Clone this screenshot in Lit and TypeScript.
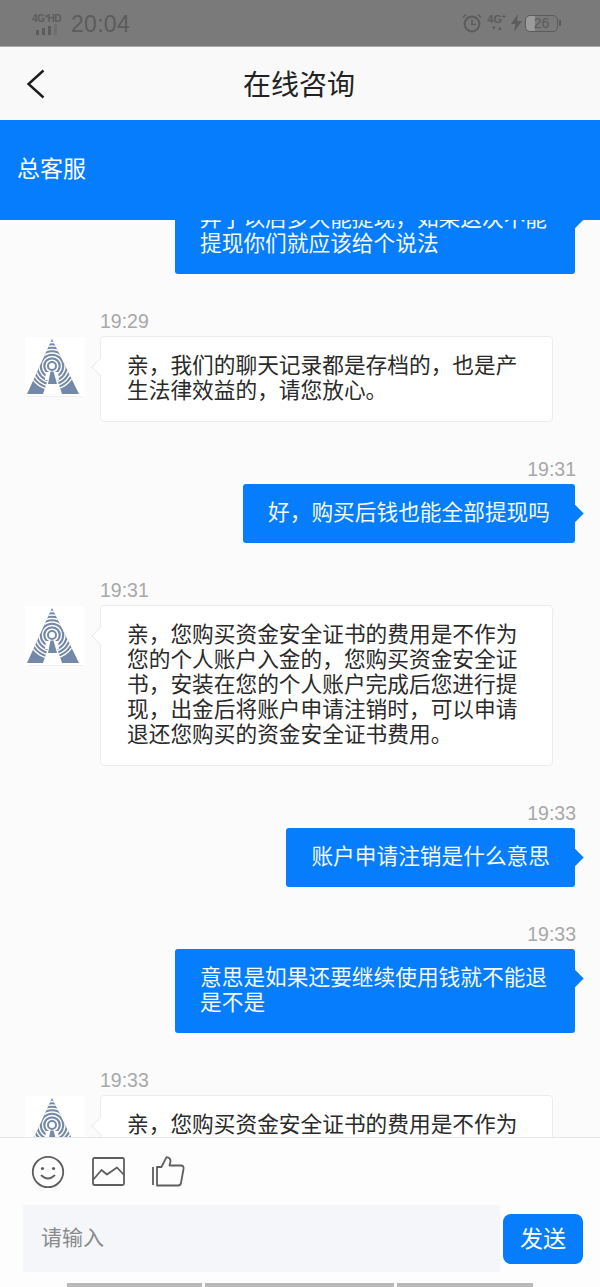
import { LitElement, html, css, svg } from "lit";
import { customElement } from "lit/decorators.js";

type Msg = { side: "l" | "r"; time?: string; text: string };

const messages: Msg[] = [
  { side: "r", text: "弄了以后多久能提现，如果这次不能提现你们就应该给个说法" },
  { side: "l", time: "19:29", text: "亲，我们的聊天记录都是存档的，也是产生法律效益的，请您放心。" },
  { side: "r", time: "19:31", text: "好，购买后钱也能全部提现吗" },
  { side: "l", time: "19:31", text: "亲，您购买资金安全证书的费用是不作为您的个人账户入金的，您购买资金安全证书，安装在您的个人账户完成后您进行提现，出金后将账户申请注销时，可以申请退还您购买的资金安全证书费用。" },
  { side: "r", time: "19:33", text: "账户申请注销是什么意思" },
  { side: "r", time: "19:33", text: "意思是如果还要继续使用钱就不能退是不是" },
  { side: "l", time: "19:33", text: "亲，您购买资金安全证书的费用是不作为您的个人账户入金的，您购买资金安全证书，安装在您的个人账户完成后您进行提现。" },
];

const avatar = svg`<svg class="logo" viewBox="0 0 60 60" width="60" height="60">
  <defs><clipPath id="tri"><path d="M27 2 L2 57 H54 Z"/></clipPath></defs>
  <rect width="60" height="60" fill="#fff"/>
  <path d="M27 2 L2 57 H18 L23 42 H32 L37 57 H54 Z" fill="#7488a8"/>
  <g clip-path="url(#tri)" fill="none" stroke="#fff" stroke-width="1.4">
    <circle cx="27" cy="29" r="9.5"/>
    <circle cx="27" cy="29" r="13"/>
    <circle cx="27" cy="29" r="16.5"/>
    <circle cx="27" cy="29" r="20"/>
    <circle cx="27" cy="29" r="23.5"/>
  </g>
  <circle cx="27" cy="29" r="6.6" fill="#fff"/>
  <circle cx="27" cy="29" r="4" fill="none" stroke="#7488a8" stroke-width="2"/>
  <path d="M21 35 L33 35 L34 43 H20 Z" fill="#fff"/>
  <path d="M25.5 34.5 H28.5 L32 47 H23 Z" fill="#7488a8"/>
  <path d="M2 59.5 H58" stroke="#eef0f4" stroke-width="1"/>
</svg>`;

@customElement("app-root")
export class AppRoot extends LitElement {
  static styles = css`
    :host {
      display: flex;
      flex-direction: column;
      width: 600px;
      height: 1287px;
      overflow: hidden;
      background: #fbfbfb;
      font-family: "Noto Sans CJK SC", "Liberation Sans", sans-serif;
    }
    .status {
      height: 47px;
      flex: none;
      background: #7a7a7a;
      border-bottom: 1px solid #a8a8a8;
      box-sizing: border-box;
      display: flex;
      align-items: center;
      padding: 0 39px 0 32px;
      color: #5c5c5c;
      font-family: "Liberation Sans", sans-serif;
    }
    .sig { display: flex; flex-direction: column; align-items: flex-start; width: 39px; margin-top: 2px; }
    .sig-t { font-size: 10px; line-height: 11px; font-weight: 700; letter-spacing: -0.3px; white-space: nowrap; }
    .bars { display: flex; align-items: flex-end; gap: 3px; height: 11px; margin-left: 4px; }
    .bars i { display: block; width: 3px; background: #5c5c5c; }
    .bars i:last-child { background: #6e6e6e; }
    .clock { font-size: 23px; line-height: 26px; letter-spacing: 0.3px; margin-top: 2px; }
    .spacer { flex: 1; }
    .net { display: flex; flex-direction: column; align-items: center; margin: 0 5px; font-size: 11px; line-height: 11px; font-weight: 700; }
    .net span:last-child { font-size: 6px; line-height: 7px; }
    .batt {
      width: 31px; height: 15px; border: 1.5px solid #5c5c5c; border-radius: 5px;
      font-size: 14px; line-height: 15px; text-align: center; margin-left: 3px;
      background: linear-gradient(90deg, #9b9b9b 28%, transparent 28%);
    }
    .cap { width: 2px; height: 6px; background: #5c5c5c; margin-left: 1px; }

    .nav {
      height: 73px;
      flex: none;
      background: #f9f9f9;
      display: grid;
      grid-template-columns: 1fr auto 1fr;
      align-items: center;
      color: #222;
      padding-left: 26px;
      padding-right: 26px;
    }
    .nav svg { display: block; }
    .title { font-size: 28px; line-height: 36px; margin-bottom: 1px; margin-left: -2px; }

    .band {
      height: 100px;
      flex: none;
      box-sizing: border-box;
      background: #057dfc;
      color: #fff;
      font-size: 23px;
      display: flex;
      align-items: center;
      padding: 0 0 6px 17px;
      position: relative;
      z-index: 1;
    }

    .list {
      height: 917px;
      flex: none;
      overflow: hidden;
      box-sizing: border-box;
      padding: 0 25px;
      display: flex;
      flex-direction: column;
    }
    .list-inner { margin-top: -30px; display: flex; flex-direction: column; gap: 37px; }
    .time { font-family: "Liberation Sans", sans-serif; font-size: 19.5px; line-height: 20px; color: #a8a8a8; margin-bottom: 5px; }
    .m-l { display: flex; align-items: flex-start; }
    .av { width: 60px; height: 60px; flex: none; margin-top: 26px; margin-right: 15px; }
    .logo { display: block; }
    .l-col { width: 453px; }
    .bubble { position: relative; box-sizing: border-box; font-size: 21.7px; line-height: 25px; }
    .bubble.l {
      background: #fff;
      border: 1px solid #ececec;
      border-radius: 4px;
      padding: 14px 26px 20px;
      color: #2a2a2a;
    }
    .bubble.l::before {
      content: "";
      position: absolute;
      left: -7px;
      top: 23px;
      width: 13px;
      height: 13px;
      background: #fff;
      border-left: 1px solid #ececec;
      border-bottom: 1px solid #ececec;
      transform: rotate(45deg);
    }
    .m-r { display: flex; flex-direction: column; align-items: flex-end; }
    .m-r .time { margin-right: -1px; }
    .bubble.r {
      background: #057dfc;
      border-radius: 3px;
      padding: 14px 25px 20px;
      color: #f4f9ff;
      max-width: 400px;
    }
    .bubble.r::after {
      content: "";
      position: absolute;
      right: -6px;
      top: 23px;
      width: 13px;
      height: 13px;
      background: #057dfc;
      transform: rotate(45deg);
    }
    .wide { width: 400px; }

    .composer {
      flex: 1;
      background: #fdfdfd;
      border-top: 1px solid #e6e6e6;
      position: relative;
      z-index: 1;
      display: flex;
      flex-direction: column;
    }
    .tools { display: flex; align-items: center; gap: 27px; padding: 17px 0 0 31px; height: 50px; box-sizing: border-box; }
    .tools svg { display: block; flex: none; }
    .row { display: flex; align-items: center; padding-left: 23px; gap: 3px; margin-top: 17px; }
    .input {
      width: 477px; height: 67px; background: #f4f6fa; color: #8a8a8a;
      font-size: 21px; display: flex; align-items: center; box-sizing: border-box; padding: 0 0 6px 18px;
    }
    .send {
      width: 80px; height: 50px; box-sizing: border-box; background: #057dfc; color: #fff; border-radius: 8px;
      font-size: 23px; display: flex; align-items: center; justify-content: center; padding-bottom: 4px;
    }
    .home { flex: none; height: 4px; display: flex; gap: 3px; padding-left: 67px; background: #fdfdfd; position: relative; z-index: 1; }
    .home i { display: block; height: 4px; background: #b9b9b9; }
  `;

  private renderMsg(m: Msg) {
    if (m.side === "l") {
      return html`<div class="m-l">
        <div class="av">${avatar}</div>
        <div class="l-col">
          ${m.time ? html`<div class="time">${m.time}</div>` : ""}
          <div class="bubble l">${m.text}</div>
        </div>
      </div>`;
    }
    return html`<div class="m-r">
      ${m.time ? html`<div class="time">${m.time}</div>` : ""}
      <div class="bubble r ${m.text.length > 16 ? "wide" : ""}">${m.text}</div>
    </div>`;
  }

  render() {
    return html`
      <div class="status">
        <div class="sig">
          <span class="sig-t">4G⁺HD</span>
          <div class="bars">
            <i style="height:5px"></i><i style="height:7px"></i><i style="height:9px"></i><i style="height:11px"></i>
          </div>
        </div>
        <span class="clock">20:04</span>
        <span class="spacer"></span>
        <svg width="20" height="20" viewBox="0 0 20 20" fill="none" stroke="#5c5c5c" stroke-width="2">
          <circle cx="10" cy="11" r="7.4"/>
          <path d="M10 6.5V11.5H14" stroke-width="1.6"/>
          <path d="M1 4.5 L4 1.5 M19 4.5 L16 1.5" stroke-width="1.5"/>
        </svg>
        <div class="net"><span>4G⁺</span><span>▼▲</span></div>
        <svg width="11" height="18" viewBox="0 0 11 18" fill="#5c5c5c"><path d="M7 0 L0 10 H4.5 L3 18 L11 7 H6 Z"/></svg>
        <div class="batt">26</div>
        <div class="cap"></div>
      </div>

      <div class="nav">
        <svg width="20" height="30" viewBox="0 0 20 30" fill="none" stroke="#1c1c1c" stroke-width="2.4">
          <path d="M17.5 1.5 L2.5 15 L17.5 28.5"/>
        </svg>
        <div class="title">在线咨询</div>
        <span></span>
      </div>

      <div class="band">总客服</div>

      <div class="list">
        <div class="list-inner">${messages.map((m) => this.renderMsg(m))}</div>
      </div>

      <div class="composer">
        <div class="tools">
          <svg width="34" height="34" viewBox="0 0 34 34" fill="none" stroke="#5e5e5e" stroke-width="1.8" stroke-linecap="round">
            <circle cx="17" cy="17" r="15.2"/>
            <circle cx="11.5" cy="13.5" r="1.6" fill="#5e5e5e" stroke="none"/>
            <circle cx="22.5" cy="13.5" r="1.6" fill="#5e5e5e" stroke="none"/>
            <path d="M10.5 20.5 Q17 26.5 23.5 20.5"/>
          </svg>
          <svg width="33" height="30" viewBox="0 0 33 30" fill="none" stroke="#5e5e5e" stroke-width="1.8" stroke-linejoin="round">
            <rect x="1" y="1" width="31" height="27" rx="1.5"/>
            <path d="M1 23 L9.5 13 L15 17.5 L25 10.5 L32 18"/>
          </svg>
          <svg width="33" height="32" viewBox="0 0 33 32" fill="none" stroke="#5e5e5e" stroke-width="1.8" stroke-linejoin="round">
            <path d="M1 11 V29" />
            <path d="M5 11 H9.5 L14.5 1.2 Q18.5 1.5 18.5 5.5 L17.5 9.5 H29 Q32 9.5 31.5 13 L29 27 Q28.5 29.5 26 29.5 H5 Z"/>
          </svg>
        </div>
        <div class="row">
          <div class="input">请输入</div>
          <div class="send">发送</div>
        </div>
      </div>
      <div class="home">
        <i style="width:135px"></i><i style="width:189px"></i><i style="width:136px"></i>
      </div>
    `;
  }
}
